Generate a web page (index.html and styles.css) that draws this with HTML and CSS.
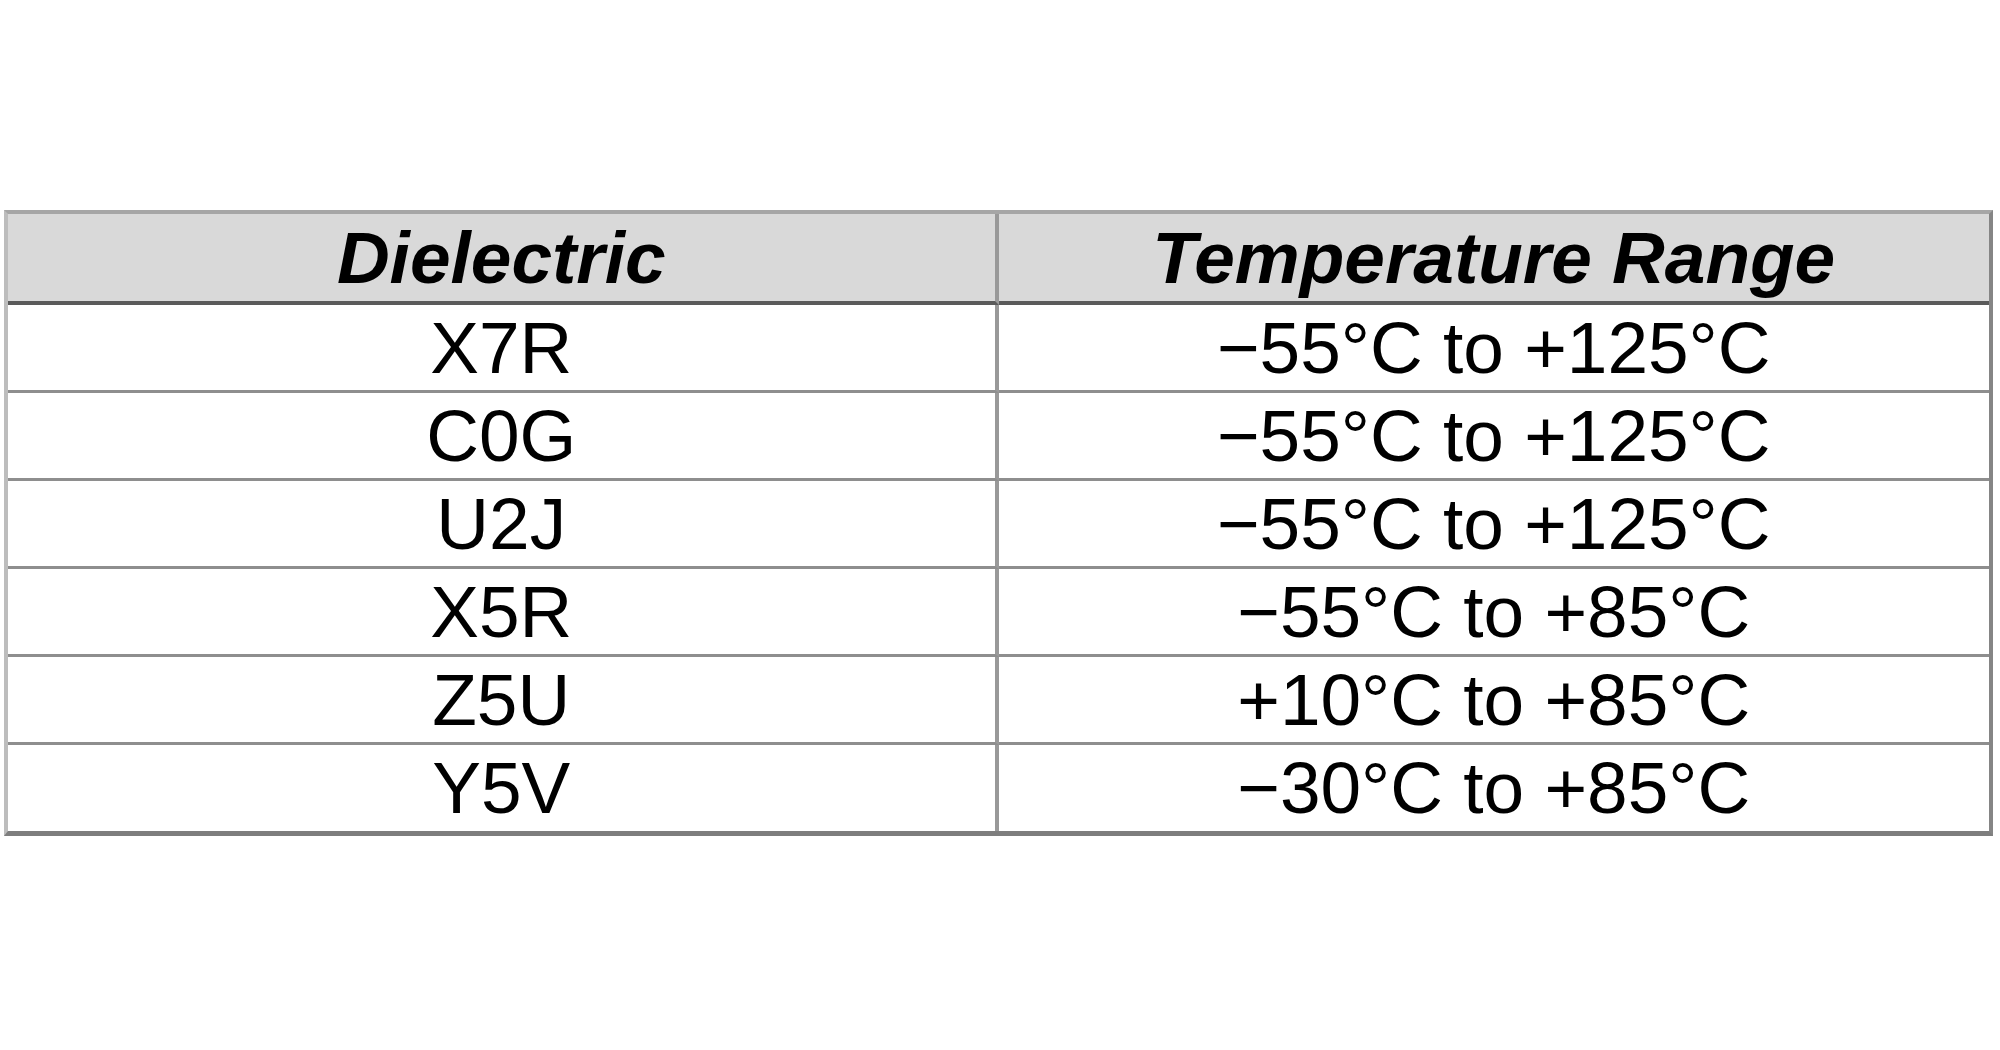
FILE: index.html
```html
<!DOCTYPE html>
<html lang="en">
<head>
  <meta charset="UTF-8" />
  <meta name="viewport" content="width=device-width, initial-scale=1.0"/>
  <title>Dielectric Temperature Ranges</title>
  <link rel="stylesheet" href="styles.css">
</head>
<body>
  <table class="temp-table">
    <colgroup>
      <col class="col-dielectric">
      <col class="col-range">
    </colgroup>
    <thead>
      <tr>
        <th>Dielectric</th>
        <th>Temperature Range</th>
      </tr>
    </thead>
    <tbody>
      <tr><td>X7R</td><td>&minus;55°C to +125°C</td></tr>
      <tr><td>C0G</td><td>&minus;55°C to +125°C</td></tr>
      <tr><td>U2J</td><td>&minus;55°C to +125°C</td></tr>
      <tr><td>X5R</td><td>&minus;55°C to +85°C</td></tr>
      <tr><td>Z5U</td><td>+10°C to +85°C</td></tr>
      <tr><td>Y5V</td><td>&minus;30°C to +85°C</td></tr>
    </tbody>
  </table>
</body>
</html>
```

FILE: styles.css
```css
body {
  margin: 0;
  background: #fff;
  font-family: 'Liberation Sans', Arial, sans-serif;
  color: #000;
}
.temp-table {
  box-sizing: border-box;
  width: 1989px;
  margin: 210px 0 0 4px;
  table-layout: fixed;
  border-collapse: separate;
  border-spacing: 0;
  border-top: 4px solid #a6a6a6;
  border-left: 4px solid #bdbdbd;
  border-right: 4px solid #858585;
  border-bottom: 5px solid #7e7e7e;
}
.col-dielectric { width: 50%; }
.temp-table th,
.temp-table td {
  padding: 0;
  text-align: center;
  font-size: 73px;
  white-space: nowrap;
}
.temp-table th {
  background: #d9d9d9;
  font-weight: 700;
  font-style: italic;
  line-height: 87px;
  border-bottom: 4px solid #5a5a5a;
}
.temp-table td {
  font-weight: 400;
  line-height: 85px;
  border-bottom: 3px solid #8e8e8e;
}
.temp-table tbody tr:last-child td {
  border-bottom: none;
  line-height: 86px;
}
.temp-table th:first-child,
.temp-table td:first-child {
  border-right: 4px solid #999;
}
```
